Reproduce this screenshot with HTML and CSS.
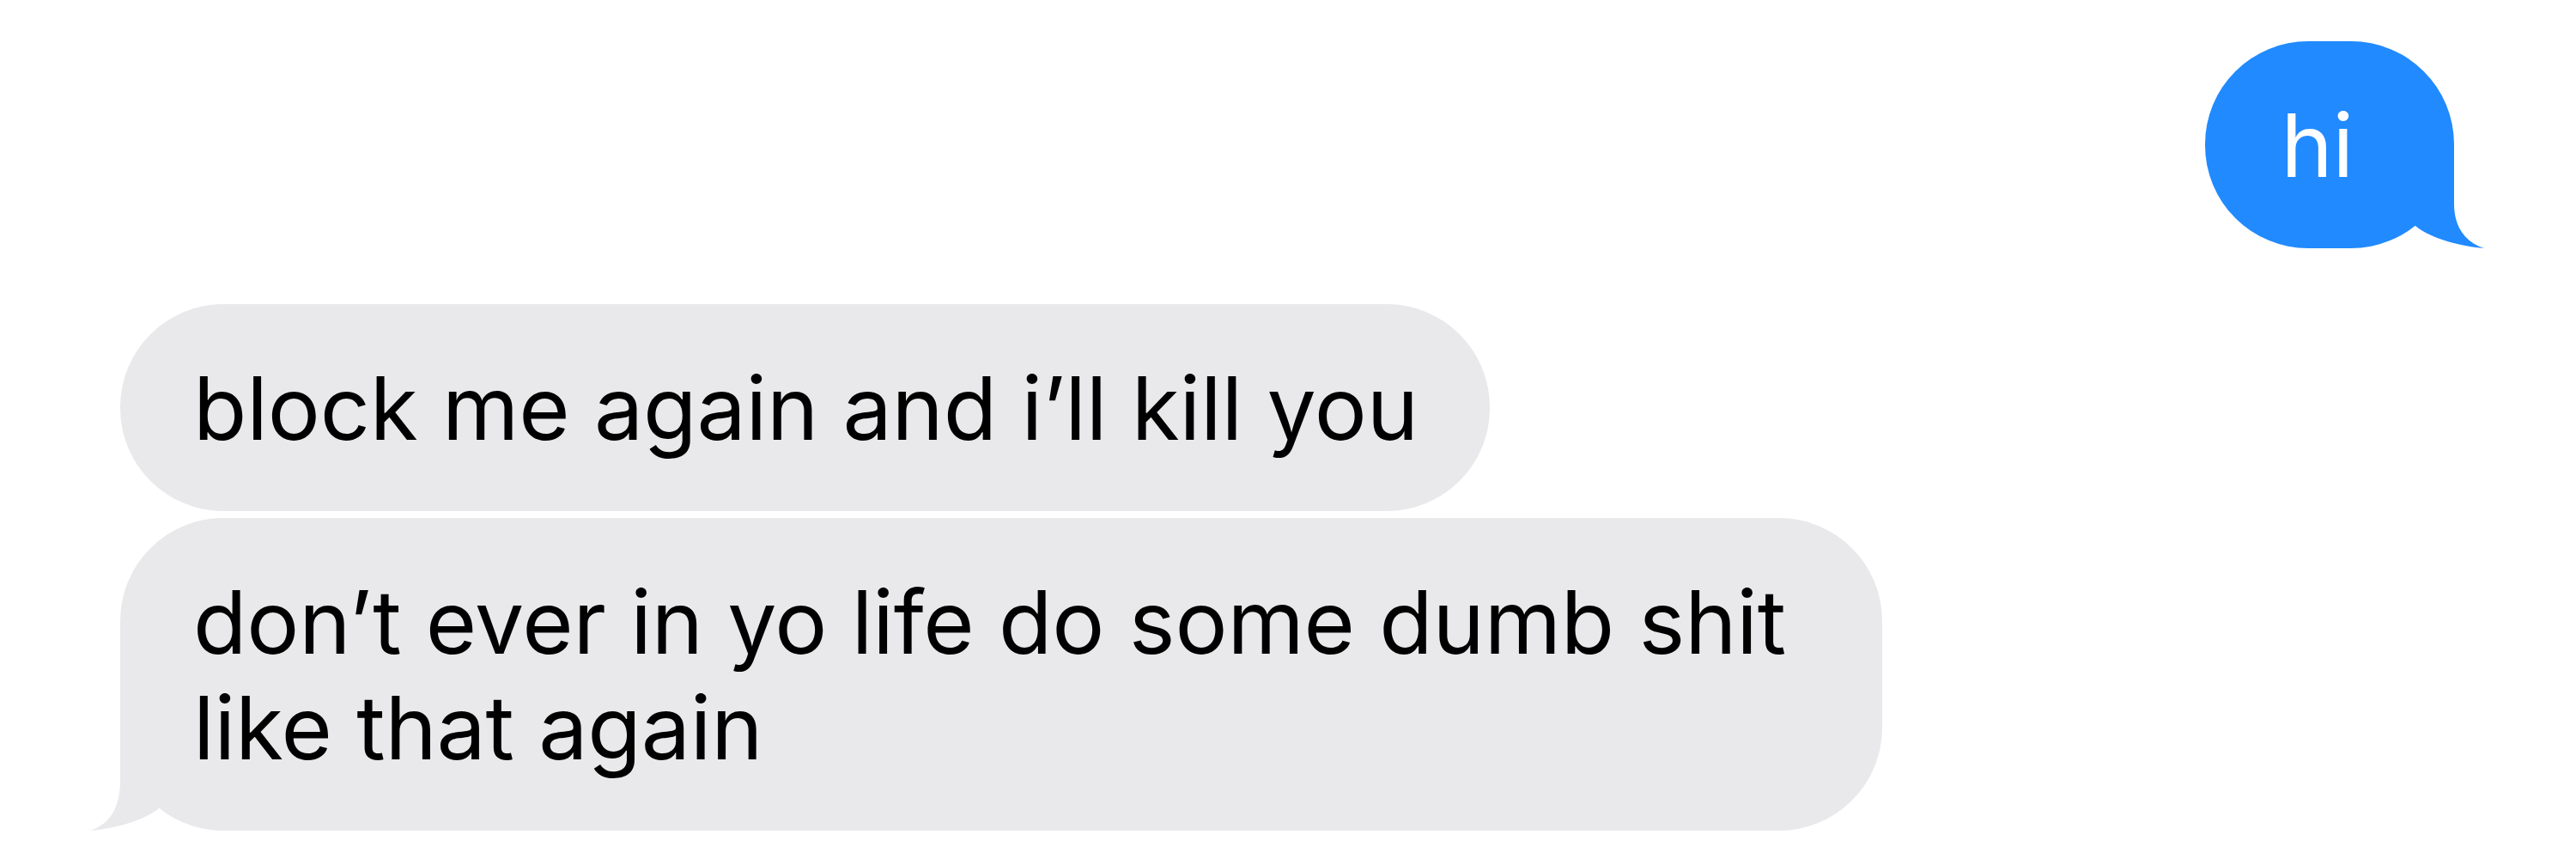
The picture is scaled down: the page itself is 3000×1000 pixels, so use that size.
FILE: index.html
```html
<!DOCTYPE html>
<html lang="en">
<head>
  <meta charset="UTF-8" />
  <meta name="viewport" content="width=device-width, initial-scale=1.0"/>
  <title>Messages</title>
  <link rel="stylesheet" href="styles.css">
</head>
<body>
  <div class="chat">
    <div class="bubble sent">
      hi
      <svg class="tail" width="80" height="120" viewBox="0 0 80 120">
        <path d="M35 0 L35 68 C35 92 25 112 0 120 C25 118 60 110 80 94 L80 0 Z"/>
      </svg>
    </div>

    <div class="bubble received">block me again and i’ll kill you</div>
    <div class="bubble received last">
      don’t ever in yo life do some dumb shit like that again
      <svg class="tail" width="80" height="120" viewBox="0 0 80 120">
        <path d="M35 0 L35 62 C35 90 25 112 0 120 C25 118 60 110 80 94 L80 0 Z"/>
      </svg>
    </div>
  </div>
</body>
</html>
```

FILE: styles.css
```css
* {
  box-sizing: border-box;
  font-family: 'Inter', 'Roboto', sans-serif;
}
body {
  margin: 0;
  background: #fff;
}
.chat {
  display: flex;
  flex-direction: column;
  align-items: flex-start;
  padding: 48px 142px 0 140px;
}
.bubble {
  position: relative;
  max-width: 2052px;
  padding: 60px 83px 58px 85px;
  border-radius: 120px;
  font-size: 102px;
  line-height: 123px;
  letter-spacing: -0.2px;
}
.sent {
  align-self: flex-end;
  margin-bottom: 65px;
  padding-left: 88px;
  padding-right: 117px;
  background: #218aff;
  color: #fff;
}
.received {
  background: #e9e9eb;
  color: #000;
}
.received + .received {
  margin-top: 8px;
}
.tail {
  position: absolute;
  bottom: 0;
  display: block;
}
.received .tail {
  left: -35px;
  fill: #e9e9eb;
}
.sent .tail {
  right: -35px;
  fill: #218aff;
  transform: scaleX(-1);
}
```
